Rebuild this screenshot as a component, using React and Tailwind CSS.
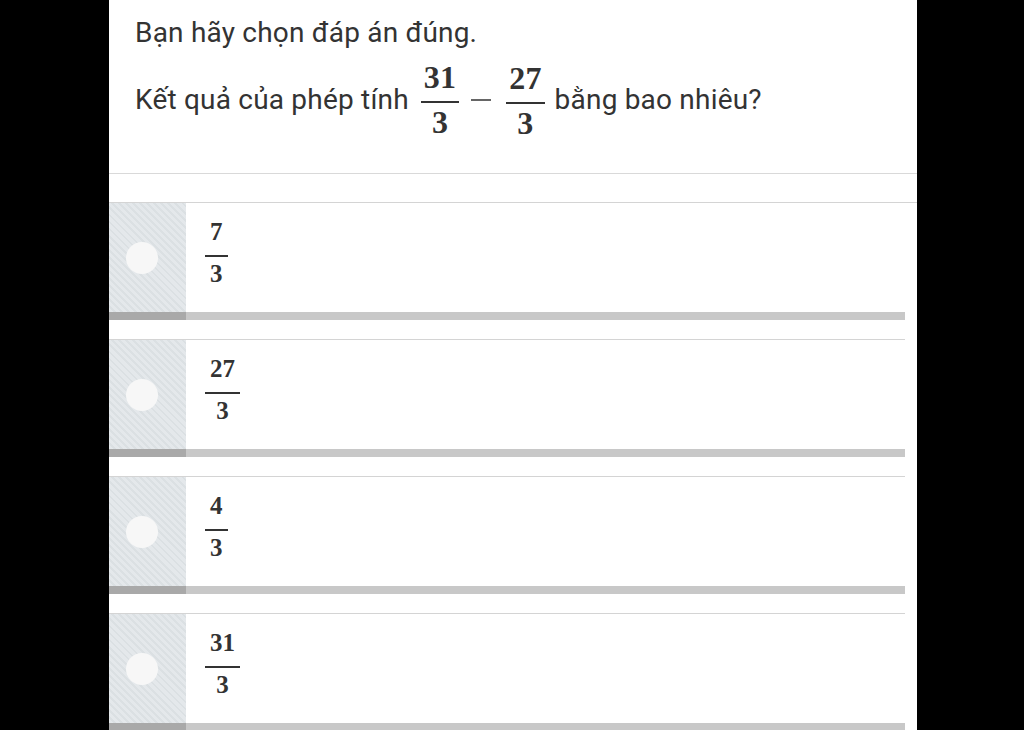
import React from "react";

const serif = { fontFamily: '"Liberation Serif", "Times New Roman", serif' };

function QFrac({ num, den }) {
  return (
    <span className="inline-flex flex-col items-center font-bold text-[32px] text-[#333]" style={serif}>
      <span className="leading-[32px] mb-[8px] px-[3px]">{num}</span>
      <span className="self-stretch h-[2px] bg-[#333]" />
      <span className="leading-[32px] mt-[3px] px-[3px]">{den}</span>
    </span>
  );
}

function OFrac({ num, den }) {
  return (
    <span className="inline-flex flex-col items-center font-bold text-[25px] text-[#333]" style={serif}>
      <span className="leading-[25px] mb-[11px] px-[5px]">{num}</span>
      <span className="self-stretch h-[2px] bg-[#333]" />
      <span className="leading-[25px] mt-[4px] px-[5px]">{den}</span>
    </span>
  );
}

function Option({ num, den, first }) {
  return (
    <div className={first ? "mb-[19px]" : "mb-[19px] mr-[12px]"}>
      <div className="h-px bg-[#d4d4d4]" />
      <div className="flex h-[109px]">
        <div className="w-[77px] h-full flex items-center pl-[17px] bg-[repeating-linear-gradient(45deg,#e4e8eb_0px,#e4e8eb_3px,#dbe0e3_3px,#dbe0e3_5px)]">
          <div className="w-[32px] h-[32px] rounded-full bg-[#f7f7f7]" />
        </div>
        <div className="flex-1 bg-white pl-[19px] pt-[16px]">
          <OFrac num={num} den={den} />
        </div>
      </div>
      <div className={first ? "flex h-[8px] mr-[12px]" : "flex h-[8px]"}>
        <div className="w-[77px] bg-[#a9a9a9]" />
        <div className="flex-1 bg-[#c8c8c8]" />
      </div>
    </div>
  );
}

export default function App() {
  return (
    <div className="w-[1024px] h-[730px] overflow-hidden bg-black">
      <div className="ml-[109px] w-[808px] h-full bg-white" style={{ fontFamily: 'Roboto, "Liberation Sans", Arial, sans-serif' }}>
        <div className="pl-[26px] pt-[17px] pb-[34px] border-b border-[#d9d9d9] text-[#333] text-[28px] tracking-[0.2px]">
          <div className="leading-[32px]">Bạn hãy chọn đáp án đúng.</div>
          <div className="flex items-center mt-[10px]">
            <span className="leading-[32px] mt-[2px] mr-[12px]">Kết quả của phép tính</span>
            <QFrac num="31" den="3" />
            <span className="w-[20px] h-[1.5px] bg-[#666] mx-[12px] mt-[2px]" />
            <span className="ml-[3px]">
              <QFrac num="27" den="3" />
            </span>
            <span className="leading-[32px] mt-[2px] ml-[10px]">bằng bao nhiêu?</span>
          </div>
        </div>
        <div className="pt-[28px]">
          <Option num="7" den="3" first />
          <Option num="27" den="3" />
          <Option num="4" den="3" />
          <Option num="31" den="3" />
        </div>
      </div>
    </div>
  );
}
